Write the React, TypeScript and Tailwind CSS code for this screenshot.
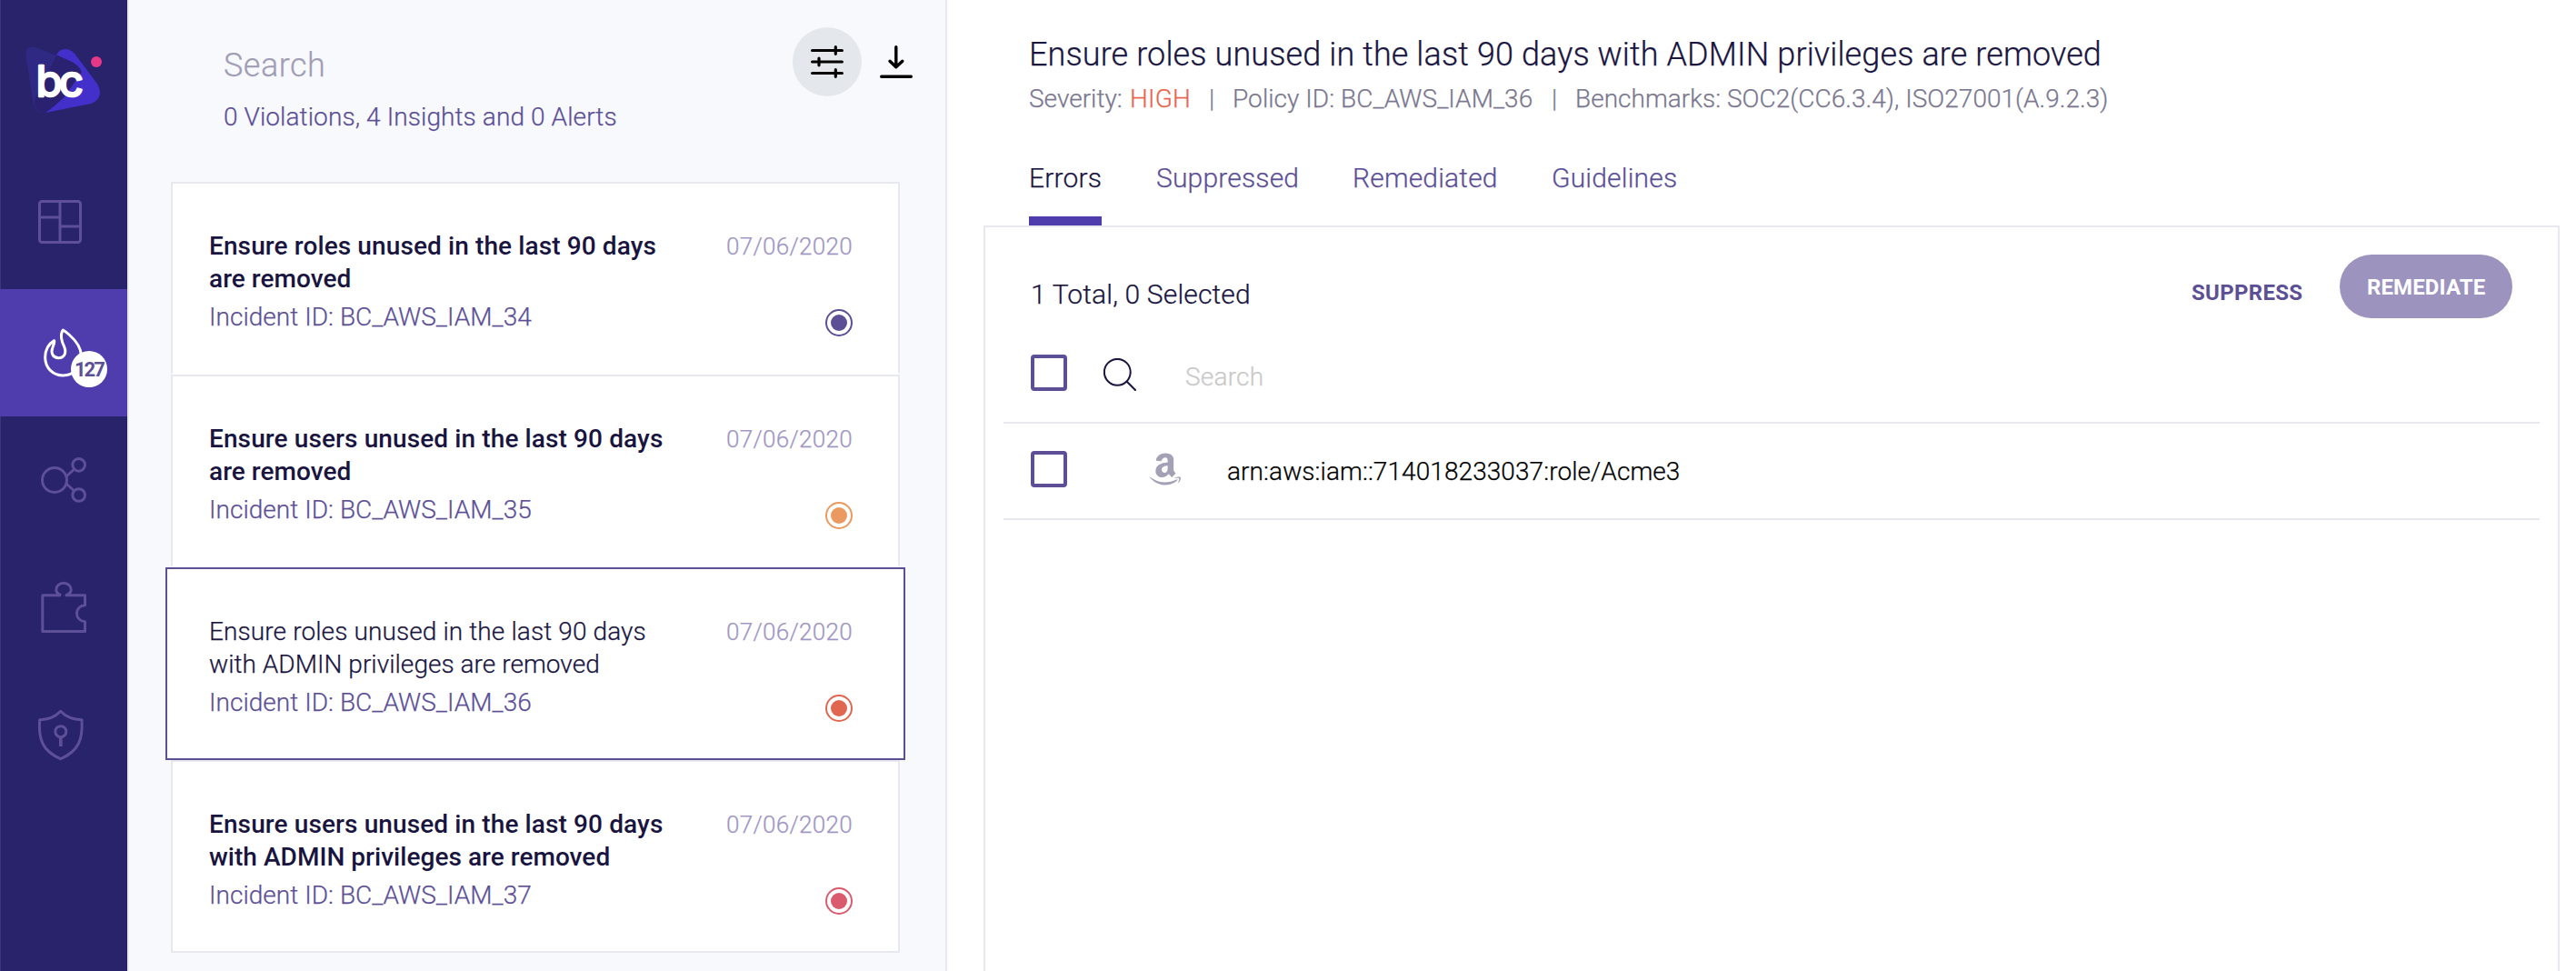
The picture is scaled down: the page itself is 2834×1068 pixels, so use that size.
import type { ReactNode } from "react";
import { FaAmazon } from "react-icons/fa";

type Incident = {
  lines: [string, string];
  id: string;
  ring: string;
  dot: string;
  selected?: boolean;
};

const incidents: Incident[] = [
  {
    lines: ["Ensure roles unused in the last 90 days", "are removed"],
    id: "BC_AWS_IAM_34",
    ring: "border-[#5c4f96]",
    dot: "bg-[#5c4f96]",
  },
  {
    lines: ["Ensure users unused in the last 90 days", "are removed"],
    id: "BC_AWS_IAM_35",
    ring: "border-[#ea9961]",
    dot: "bg-[#ea9961]",
  },
  {
    lines: ["Ensure roles unused in the last 90 days", "with ADMIN privileges are removed"],
    id: "BC_AWS_IAM_36",
    ring: "border-[#e16650]",
    dot: "bg-[#e16650]",
    selected: true,
  },
  {
    lines: ["Ensure users unused in the last 90 days", "with ADMIN privileges are removed"],
    id: "BC_AWS_IAM_37",
    ring: "border-[#d95b6d]",
    dot: "bg-[#d95b6d]",
  },
];

function Logo() {
  return (
    <svg className="block h-[178px] w-[140px]" viewBox="0 0 420 534">
      <path
        d="M85 184 Q83 152 112 155 Q122 157 140 165 L186 182 L262 206 L262 250 L152 371 Q118 380 110 342 Z"
        fill="#2f2983"
      />
      <path
        d="M186 181 Q200 158 224 163 Q238 167 247 178 L322 278 Q344 322 303 341 L150 372 Q128 366 118 320 Z"
        fill="#4330cb"
      />
      <path
        d="M186 181 L236 203 Q262 216 270 238 L214 318 Q180 352 150 372 Q122 372 113 346 L118 318 Z"
        fill="#2a2170"
      />
      <circle cx="318" cy="204" r="18" fill="#e63888" />
      <text
        x="119 195"
        y="319"
        fontSize="140"
        fontWeight="400"
        fill="#ffffff"
        stroke="#ffffff"
        strokeWidth="8"
        strokeLinejoin="round"
        className="font-['Inter',sans-serif]"
      >
        bc
      </text>
    </svg>
  );
}

function NavItem({ viewBox, active, children, badge }: { viewBox: string; active?: boolean; children: ReactNode; badge?: string }) {
  return (
    <div className={active ? "relative h-[140px] bg-[#4f3dae] text-white" : "relative h-[140px] text-[#5d4f98]"}>
      <svg
        className="block h-[140px] w-[140px]"
        viewBox={viewBox}
        fill="none"
        stroke="currentColor"
        strokeWidth="9"
        strokeLinecap="butt"
        strokeLinejoin="round"
      >
        {children}
      </svg>
      {badge && (
        <span className="absolute left-[78px] top-[68px] h-10 w-10 rounded-full bg-white pl-[4px] pt-[8px] text-[22px] font-bold leading-[25px] tracking-[-2px] text-[#5c4f96]">
          {badge}
        </span>
      )}
    </div>
  );
}

function Sidebar() {
  return (
    <nav className="w-[140px] shrink-0 bg-[#28236a] shadow-[inset_1px_0_0_#3c3777]">
      <Logo />
      <NavItem viewBox="0 534 420 420">
        <rect x="130.500" y="664.500" width="135" height="135" rx="8" />
        <path d="M198 664V800M130 717H198M198 747H266" />
      </NavItem>
      <NavItem viewBox="0 954 420 420" active badge="127">
        <path d="M208 1089 C197 1104 204 1130 212 1144 C221 1166 211 1181 193 1181 C173 1180 168 1163 173 1149 C176 1139 181 1130 179 1124 C162 1134 149 1154 149 1180 C150 1216 176 1239 208 1239 C244 1238 270 1212 268 1172 C267 1144 246 1120 228 1104 C220 1097 213 1092 208 1089 Z" />
      </NavItem>
      <NavItem viewBox="0 -36 420 420">
        <circle cx="180" cy="174" r="40.500" />
        <circle cx="260" cy="124" r="20.500" />
        <circle cx="260" cy="223.500" r="20.500" />
        <path d="M219 162L245 138M219 186L245 210" />
      </NavItem>
      <NavItem viewBox="0 384 420 420">
        <path d="M201 554 H140.500 V673.500 H280.500 V641 A27 27 0 0 1 280.500 587 V554 H219 C230 549 234.500 543 234.500 536 A24.500 22 0 0 0 185.500 536 C185.500 543 190 549 201 554" />
      </NavItem>
      <NavItem viewBox="0 804 420 420">
        <path d="M200 937 C184 954 160 965 131 965 C126 1030 140 1068 200 1094 C260 1068 274 1030 270 965 C242 965 216 954 200 937 Z" />
        <circle cx="200.500" cy="1004" r="18" />
        <path d="M200.500 1022V1053" strokeWidth="11" />
      </NavItem>
    </nav>
  );
}

function IncidentCard({ incident }: { incident: Incident }) {
  const frame = incident.selected
    ? "ml-[-6px] mr-[-6px] border-[#5c4f96] pl-[46px] pr-[56px] font-light"
    : "border-[#e8e9ef] border-b-white pl-[40px] pr-[50px] font-medium last:border-b-[#e8e9ef]";
  const heading = incident.selected ? "[-webkit-text-stroke:0.25px]" : "";
  return (
    <article className={`flex h-[212px] justify-between border-2 bg-white pt-[51px] ${frame}`}>
      <div className="whitespace-nowrap text-[28px] leading-[36px] text-[#19153f]">
        <div className={`tracking-[0.11px] ${heading}`}>{incident.lines[0]}</div>
        <div className={`tracking-[0.04px] ${heading}`}>{incident.lines[1]}</div>
        <div className="mt-[6px] font-light tracking-[0.04px] text-[#5c4f96] [-webkit-text-stroke:0.25px]">
          Incident ID: {incident.id}
        </div>
      </div>
      <div className="flex flex-col items-end">
        <time className="mt-[3px] text-[26px] font-light leading-[30px] tracking-[0.3px] text-[#9f96c5] [-webkit-text-stroke:0.25px]">
          07/06/2020
        </time>
        <span className={`mt-[54px] flex h-[30px] w-[30px] items-center justify-center rounded-full border-2 ${incident.ring}`}>
          <span className={`h-[18px] w-[18px] rounded-full ${incident.dot}`} />
        </span>
      </div>
    </article>
  );
}

function IncidentList() {
  return (
    <section className="w-[902px] shrink-0 border-x-2 border-[#e8e9ef] bg-[#f8f9fd]">
      <header className="flex h-[200px]">
        <div className="flex-1 pl-[104px] pt-[52px] font-light [-webkit-text-stroke:0.25px]">
          <div className="text-[36px] leading-[40px] tracking-[0.5px] text-[#a09db5]">Search</div>
          <div className="mt-[19px] text-[28px] leading-[36px] tracking-[0.1px] text-[#5c4f96]">
            0 Violations, 4 Insights and 0 Alerts
          </div>
        </div>
        <div className="flex items-start pr-9 pt-[30px]">
          <button className="flex h-[76px] w-[76px] items-center justify-center rounded-full bg-[#e4e7eb]">
            <svg className="h-9 w-9" viewBox="0 0 36 36" fill="none" stroke="#000" strokeWidth="3.200" strokeLinecap="round">
              <path d="M1.600 5.500H34.400M1.600 18H34.400M1.600 30.500H34.400M27.300 1.700V9.300M9 14.200V21.800M27.300 26.700V34.300" />
            </svg>
          </button>
          <svg className="ml-5 mt-5 h-9 w-9" viewBox="0 0 36 36" fill="none" stroke="#000" strokeWidth="3.400" strokeLinecap="round" strokeLinejoin="round">
            <path d="M17.800 1.700V23.500M11 17.200L17.800 23.800L24.800 17.200M1.700 34.200H34.300" />
          </svg>
        </div>
      </header>
      <div className="ml-[46px] mr-[50px]">
        {incidents.map((incident) => (
          <IncidentCard key={incident.id} incident={incident} />
        ))}
      </div>
    </section>
  );
}

function Checkbox() {
  return <span className="h-10 w-10 shrink-0 rounded-[4px] border-4 border-[#5c4f96] bg-white" />;
}

function ResourcePanel() {
  return (
    <div className="ml-10 mr-[18px] flex-1 border-x-2 border-t-2 border-[#e8e8ef]">
      <div className="flex h-[130px] items-start pl-[50px] pr-[50px] pt-[30px]">
        <div className="flex-1 pt-[26px] text-[30px] font-light leading-[36px] tracking-[0.15px] text-[#19153f]">
          1 Total, 0 Selected
        </div>
        <button className="mt-[28px] w-[163px] text-left text-[24px] font-bold leading-[28px] tracking-[0.3px] text-[#5c4f96] [-webkit-text-stroke:0]">
          SUPPRESS
        </button>
        <button className="h-[70px] w-[190px] rounded-full bg-[#9d93bf] pb-[20px] pl-[30px] pt-[22px] text-left text-[24px] font-bold leading-[28px] tracking-[0.12px] text-white [-webkit-text-stroke:0]">
          REMEDIATE
        </button>
      </div>
      <div className="mx-5 flex h-[86px] items-start border-b-2 border-[#e8e8ef] pl-[30px] pt-[10px]">
        <Checkbox />
        <svg className="ml-10 mt-1 h-9 w-9" viewBox="0 0 36 36" fill="none" stroke="#19153f" strokeWidth="2" strokeLinecap="round">
          <circle cx="15.300" cy="15.300" r="14.400" />
          <path d="M25.800 25.800L35 35" />
        </svg>
        <span className="ml-[54px] mt-[7px] text-[28px] font-light leading-[36px] tracking-[0.2px] text-[#c9c9c9]">Search</span>
      </div>
      <div className="mx-5 flex h-[106px] items-start border-b-2 border-[#e8e8ef] pl-[30px] pt-[30px]">
        <Checkbox />
        <FaAmazon className="ml-[88px] h-10 w-10 text-[#a4a0b5]" />
        <span className="ml-12 mt-[5px] text-[28px] font-light leading-[36px] tracking-[0.08px] text-black">
          arn:aws:iam::714018233037:role/Acme3
        </span>
      </div>
    </div>
  );
}

function Detail() {
  return (
    <main className="flex flex-1 flex-col bg-white font-light [-webkit-text-stroke:0.25px]">
      <header className="h-[248px] whitespace-nowrap pl-[90px] pt-10">
        <h1 className="text-[36px] leading-[40px] tracking-[0.105px] text-[#19153f]">
          Ensure roles unused in the last 90 days with ADMIN privileges are removed
        </h1>
        <div className="mt-[11px] flex text-[28px] leading-[36px] text-[#7a778f]">
          <span className="w-[111px]">Severity:</span>
          <span className="w-[67px] tracking-[0.2px] text-[#e9644d]">HIGH</span>
          <span className="w-[46px] text-center">|</span>
          <span className="w-[331px] tracking-[0.06px]">Policy ID: BC_AWS_IAM_36</span>
          <span className="w-[46px] text-center">|</span>
          <span className="tracking-[0.02px]">Benchmarks: SOC2(CC6.3.4), ISO27001(A.9.2.3)</span>
        </div>
        <div className="mt-[51px] flex h-[70px] gap-[60px] text-[30px] leading-[36px] tracking-[0.17px] text-[#5c4f96]">
          <span className="w-20 border-b-[10px] border-[#4f3dae] text-[#19153f]">Errors</span>
          <span className="w-[156px]">Suppressed</span>
          <span className="w-[159px]">Remediated</span>
          <span>Guidelines</span>
        </div>
      </header>
      <ResourcePanel />
    </main>
  );
}

export default function App() {
  return (
    <div className="flex h-[1068px] w-[2834px] overflow-hidden bg-white font-['Roboto',sans-serif]">
      <Sidebar />
      <IncidentList />
      <Detail />
    </div>
  );
}
